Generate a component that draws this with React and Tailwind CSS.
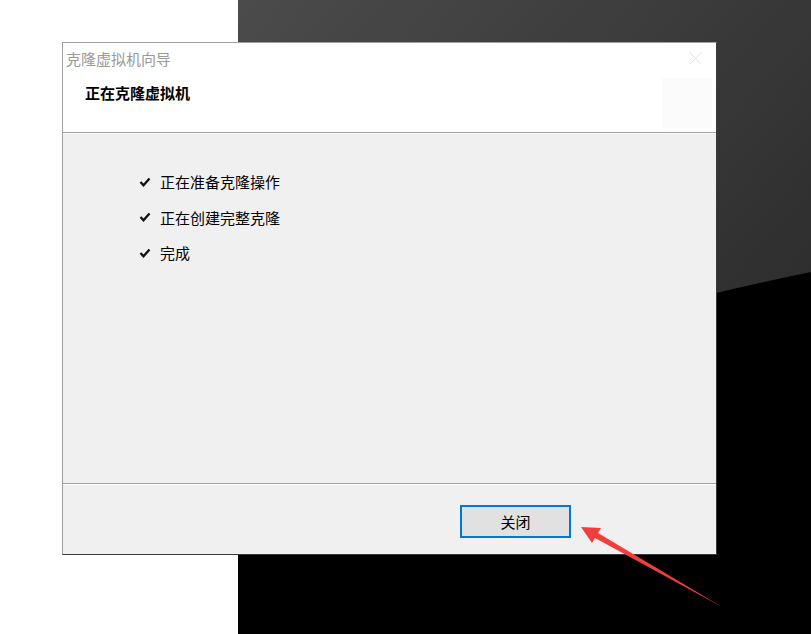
import React from 'react';

/**
 * Clone wizard window on a desktop background
 */

const steps = ['正在准备克隆操作', '正在创建完整克隆', '完成'];

function Desktop() {
  return (
    <svg className="absolute inset-0" width="811" height="634" viewBox="0 0 811 634">
      <defs>
        <linearGradient id="wall" x1="0" y1="0" x2="1" y2="1">
          <stop offset="0" stopColor="#4b4b4b" />
          <stop offset="0.55" stopColor="#353535" />
          <stop offset="1" stopColor="#222222" />
        </linearGradient>
      </defs>
      <rect x="238" y="0" width="573" height="634" fill="url(#wall)" />
      <path d="M238 634 L238 460 Q480 340 811 272 L811 634 Z" fill="#000" />
    </svg>
  );
}

function CheckMark() {
  return (
    <svg width="12" height="10" viewBox="0 0 12 10" className="shrink-0">
      <path d="M1.5 5 L4.5 8.3 L10.5 1.5" fill="none" stroke="#111" strokeWidth="2.3" strokeLinejoin="miter" />
    </svg>
  );
}

function Arrow() {
  return (
    <svg className="absolute inset-0 pointer-events-none" width="811" height="634" viewBox="0 0 811 634">
      <polygon points="581,527 601,528 598,533 722,607 595,538 592,543" fill="#f23d3d" />
    </svg>
  );
}

export default function App() {
  return (
    <div className="relative w-[811px] h-[634px] bg-white overflow-hidden font-['Noto_Sans_CJK_SC','Noto_Sans',sans-serif]">
      <Desktop />

      {/* Wizard window */}
      <div className="absolute left-[62px] top-[42px] w-[655px] h-[513px] flex flex-col border border-l-[#a0a0a0] border-t-[#a0a0a0] border-r-[#3a3a3a] border-b-[#3a3a3a] bg-white">
        {/* Title bar */}
        <div className="h-[30px] flex items-center justify-between pl-[3px] pr-[14px]">
          <span className="text-[15px] text-[#9a9a9a] leading-none">克隆虚拟机向导</span>
          <svg width="13" height="13" viewBox="0 0 13 13">
            <path d="M0.5 0.5 L12.5 12.5 M12.5 0.5 L0.5 12.5" stroke="#e2e2e2" strokeWidth="1" />
          </svg>
        </div>

        {/* Header */}
        <div className="h-[59px] flex items-start justify-between pl-[22px] pr-[4px]">
          <span className="mt-[12px] text-[15px] font-bold text-black leading-none">正在克隆虚拟机</span>
          <div className="mt-[5px] w-[50px] h-[51px] bg-[#fbfbfb]" />
        </div>

        <div className="border-t border-[#a0a0a0] border-b border-b-white" />

        {/* Progress steps */}
        <div className="flex-1 bg-[#f0f0f0] pt-[38px] pl-[76px] flex flex-col gap-[16.5px]">
          {steps.map((s) => (
            <div key={s} className="flex items-center gap-[9px] h-[19px]">
              <CheckMark />
              <span className="text-[15px] text-black leading-none">{s}</span>
            </div>
          ))}
        </div>

        <div className="border-t border-[#a0a0a0] border-b border-b-white" />

        {/* Footer */}
        <div className="h-[69px] bg-[#f0f0f0] flex items-start pl-[397px] pt-[20px]">
          <button className="w-[111px] h-[33px] border-2 border-[#0078d7] bg-[#e1e1e1] text-[15px] text-black leading-none">
            关闭
          </button>
        </div>
      </div>

      <Arrow />
    </div>
  );
}
